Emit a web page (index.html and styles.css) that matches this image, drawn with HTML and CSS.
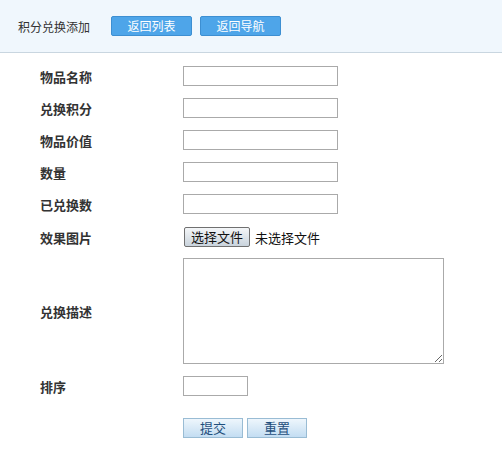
FILE: index.html
```html
<!DOCTYPE html>
<html lang="zh-CN">
<head>
<meta charset="utf-8">
<title>积分兑换添加</title>
<link rel="stylesheet" href="styles.css">
</head>
<body>
<div class="header">
  <span class="title">积分兑换添加</span>
  <div class="nav">
    <button class="nav-btn">返回列表</button>
    <button class="nav-btn">返回导航</button>
  </div>
</div>
<form class="form">
  <div class="row"><label class="lbl">物品名称</label><input class="txt" type="text"></div>
  <div class="row"><label class="lbl">兑换积分</label><input class="txt" type="text"></div>
  <div class="row"><label class="lbl">物品价值</label><input class="txt" type="text"></div>
  <div class="row"><label class="lbl">数量</label><input class="txt" type="text"></div>
  <div class="row"><label class="lbl">已兑换数</label><input class="txt" type="text"></div>
  <div class="row row-file"><label class="lbl">效果图片</label><div class="file"><button type="button" class="file-btn">选择文件</button><span class="file-name">未选择文件</span></div></div>
  <div class="row row-area"><label class="lbl">兑换描述</label><textarea class="area"></textarea></div>
  <div class="row row-sort"><label class="lbl">排序</label><input class="txt small" type="text"></div>
  <div class="row row-actions"><span class="lbl"></span><div class="actions"><button type="button" class="act-btn">提交</button><button type="button" class="act-btn">重置</button></div></div>
</form>
</body>
</html>
```
FILE: styles.css
```css
* { box-sizing: border-box; }
body {
  margin: 0;
  background: #fff;
  font-family: "Noto Sans CJK SC", "DejaVu Sans", sans-serif;
  color: #333;
}
.header {
  height: 53px;
  background: #f0f7fd;
  border-bottom: 1px solid #c9d6e0;
  display: flex;
  align-items: center;
  padding: 0 0 0 18px;
}
.title {
  font-size: 12px;
  color: #333;
  width: 93px;
}
.nav { display: flex; gap: 8px; }
.nav-btn {
  width: 81px;
  height: 20px;
  padding: 0;
  margin: 0;
  background: #4ea5e9;
  border: 1px solid #3d8fd2;
  border-radius: 2px;
  color: #fff;
  font-family: inherit;
  font-size: 12px;
  line-height: 18px;
}
.form {
  padding-top: 7px;
  display: flex;
  flex-direction: column;
}
.row {
  display: flex;
  align-items: center;
  padding: 6px 0;
}
.lbl {
  width: 183px;
  padding-left: 40px;
  font-size: 13px;
  font-weight: bold;
  color: #333;
}
.txt {
  width: 155px;
  height: 20px;
  margin: 0;
  border: 1px solid #aaa;
  background: #fff;
}
.txt.small { width: 65px; height: 20px; }
.row-file { padding: 7px 0 5px; }
.file { display: flex; align-items: center; }
.file-btn {
  width: 66px;
  height: 20px;
  margin: 0 0 0 1px;
  padding: 0;
  border: 1px solid #707070;
  border-radius: 2px;
  background: linear-gradient(#f4f6f8, #c9d3dc);
  color: #111;
  font-family: inherit;
  font-size: 13px;
  line-height: 18px;
}
.file-name {
  margin-left: 5px;
  font-size: 13px;
  color: #111;
}
.area {
  width: 261px;
  height: 106px;
  margin: 0;
  border: 1px solid #aaa;
  display: block;
}
.row-actions { padding-top: 16px; }
.actions { display: flex; gap: 4px; }
.act-btn {
  width: 60px;
  height: 20px;
  margin: 0;
  padding: 0;
  border: 1px solid #99bcd4;
  background: linear-gradient(#eef6fc, #c3ddf2);
  color: #1f4f7d;
  font-family: inherit;
  font-size: 13px;
  line-height: 18px;
}
```
